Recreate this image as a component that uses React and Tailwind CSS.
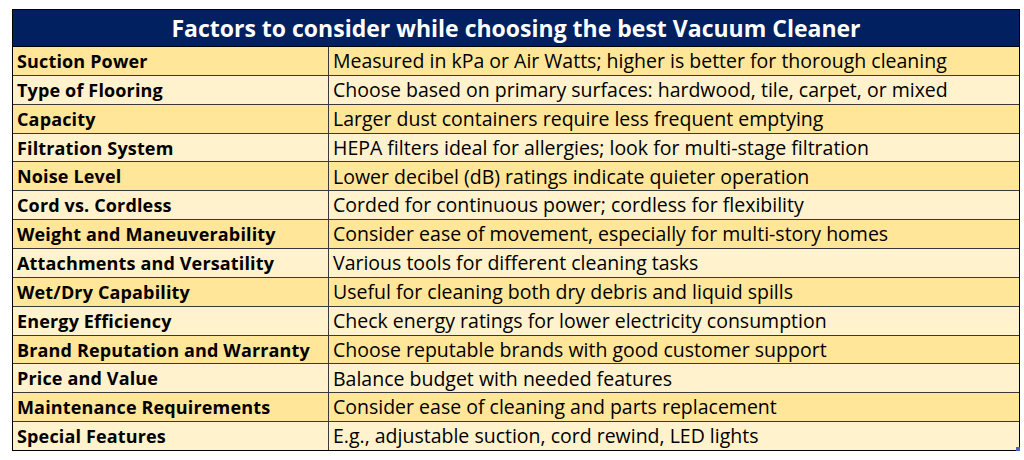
import React from "react";

const rows = [
  ["Suction Power", "Measured in kPa or Air Watts; higher is better for thorough cleaning"],
  ["Type of Flooring", "Choose based on primary surfaces: hardwood, tile, carpet, or mixed"],
  ["Capacity", "Larger dust containers require less frequent emptying"],
  ["Filtration System", "HEPA filters ideal for allergies; look for multi-stage filtration"],
  ["Noise Level", "Lower decibel (dB) ratings indicate quieter operation"],
  ["Cord vs. Cordless", "Corded for continuous power; cordless for flexibility"],
  ["Weight and Maneuverability", "Consider ease of movement, especially for multi-story homes"],
  ["Attachments and Versatility", "Various tools for different cleaning tasks"],
  ["Wet/Dry Capability", "Useful for cleaning both dry debris and liquid spills"],
  ["Energy Efficiency", "Check energy ratings for lower electricity consumption"],
  ["Brand Reputation and Warranty", "Choose reputable brands with good customer support"],
  ["Price and Value", "Balance budget with needed features"],
  ["Maintenance Requirements", "Consider ease of cleaning and parts replacement"],
  ["Special Features", "E.g., adjustable suction, cord rewind, LED lights"],
];

export default function App() {
  return (
    <div className="w-[1024px] h-[460px] bg-white pt-[9px] pl-[12px] font-['Open_Sans',sans-serif]">
      <div className="relative w-[1008px] h-[442px] flex flex-col border border-black">
        <div className="h-[37px] bg-[#002060] flex items-center justify-center text-white font-bold text-[23px] border-b border-black">
          Factors to consider while choosing the best Vacuum Cleaner
        </div>
        {rows.map(([factor, note], i) => (
          <div
            key={factor}
            className={`flex-1 flex text-black leading-none ${i % 2 === 0 ? "bg-[#ffe699]" : "bg-[#fff2cc]"} ${i < rows.length - 1 ? "border-b border-[#3a3a3a]" : ""}`}
          >
            <div className="w-[316px] border-r border-[#3a3a3a] flex items-center pl-[4px] font-bold text-[18px] tracking-[0.15px]">
              {factor}
            </div>
            <div className="flex-1 flex items-center pl-[4px] text-[19.5px]">{note}</div>
          </div>
        ))}
        <div className="absolute right-[-1px] bottom-[-1px] w-[4px] h-[4px] bg-[#4a5fc1]" />
      </div>
    </div>
  );
}
